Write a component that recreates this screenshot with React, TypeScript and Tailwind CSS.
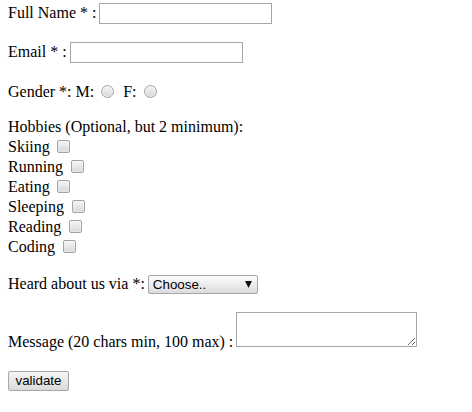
const HOBBIES = ["Skiing", "Running", "Eating", "Sleeping", "Reading", "Coding"];

const field =
  "block h-[21px] border border-[#a6a6a6] bg-white px-[2px] font-['Liberation_Sans',sans-serif] text-[13.33px] outline-none";
const box =
  "appearance-none block h-[13px] w-[13px] border border-[#a3a3a3] bg-linear-to-b from-[#f4f4f4] to-[#d9d9d9] shadow-[inset_0_0_0_1px_rgba(255,255,255,0.35)]";

export default function App() {
  return (
    <form className="min-h-screen bg-white px-2 pt-[3px] font-['Liberation_Serif','Times_New_Roman',serif] text-[16px] leading-[20px] text-black">
      <div className="flex h-[21px] items-start gap-[3px]">
        <span>Full Name * :</span>
        <input type="text" className={`${field} w-[173px]`} />
      </div>

      <div className="mt-[18px] flex h-[21px] items-start gap-[3px]">
        <span>Email * :</span>
        <input type="email" className={`${field} w-[173px]`} />
      </div>

      <div className="mt-[19px] flex items-start">
        <span>Gender *: M:</span>
        <input type="radio" name="gender" className={`${box} ml-[7px] mt-[3px] rounded-full`} />
        <span className="ml-[9px]">F:</span>
        <input type="radio" name="gender" className={`${box} ml-[7px] mt-[3px] rounded-full`} />
      </div>

      <div className="mt-[15px]">
        <div>Hobbies (Optional, but 2 minimum):</div>
        {HOBBIES.map((h) => (
          <div key={h} className="flex h-[20px] items-start">
            <span>{h}</span>
            <input type="checkbox" className={`${box} ml-[7.5px] mt-[3px] rounded-[2px]`} />
          </div>
        ))}
      </div>

      <div className="mt-[17px] flex items-start gap-[3px]">
        <span>Heard about us via *:</span>
        <button
          type="button"
          className="mt-[1px] flex h-[19px] w-[110px] items-center justify-between rounded-[2px] border border-[#a6a6a6] bg-linear-to-b from-[#fdfdfd] to-[#dcdcdc] pl-[4px] pr-[5px] font-['Liberation_Sans',sans-serif] text-[13.33px] leading-[15px]"
        >
          <span>Choose..</span>
          <svg width="7" height="7" viewBox="0 0 7 7">
            <polygon points="0,0 7,0 3.5,7" fill="#111" />
          </svg>
        </button>
      </div>

      <div className="mt-[18px] flex items-start gap-[3px]">
        <span className="mt-[20px]">Message (20 chars min, 100 max) :</span>
        <textarea className="block h-[35px] w-[181px] resize border border-[#a6a6a6] bg-white outline-none" />
      </div>

      <button
        type="button"
        className="mt-[19px] block h-[20px] w-[61px] rounded-[2px] border border-[#a6a6a6] bg-linear-to-b from-[#f6f6f6] to-[#dadada] text-center font-['Liberation_Sans',sans-serif] text-[13.33px] leading-[16px]"
      >
        validate
      </button>
    </form>
  );
}
